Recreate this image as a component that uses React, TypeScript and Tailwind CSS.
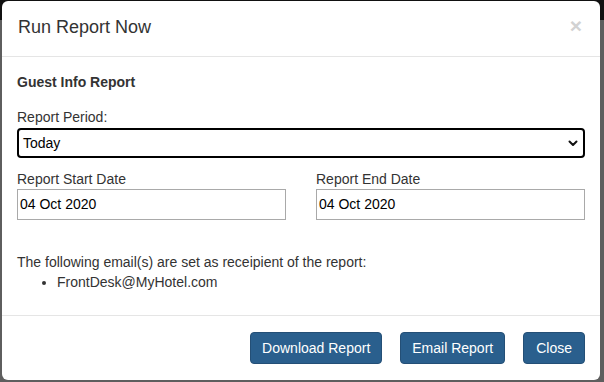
import React from "react";

export default function App() {
  return (
    <div
      className="w-[604px] h-[382px] overflow-hidden bg-[linear-gradient(#111111_0px,#111111_20px,#5e5e5e_20px)] pt-[1px] pl-[2px]"
      style={{ fontFamily: '"Liberation Sans", Arial, sans-serif' }}
    >
      <div className="w-[598px] h-[379px] bg-white rounded-[6px] text-[14px] text-[#333333] flex flex-col">
        {/* Header */}
        <div className="h-[56px] border-b border-[#e5e5e5] pl-[16px] pr-[18px] pt-[16px] flex items-start">
          <div className="text-[18px] leading-[20px] text-[#333333]">Run Report Now</div>
          <div className="ml-auto -mt-[2px] text-[21px] font-bold leading-[21px] text-[#d2d2d2]">×</div>
        </div>
        {/* Body */}
        <div className="h-[259px] px-[15px] pt-[15px] border-b border-[#e5e5e5]">
          <div className="font-bold leading-[20px]">Guest Info Report</div>
          <div className="mt-[15px] leading-[20px]">Report Period:</div>
          <div className="mt-[1px] h-[30px] rounded-[4px] border-2 border-black flex items-center pl-[4px] pr-[4px] text-black">
            <span>Today</span>
            <svg className="ml-auto" width="12" height="12" viewBox="0 0 12 12">
              <path d="M2.5 4.5 L6 8 L9.5 4.5" fill="none" stroke="#111" strokeWidth="2" strokeLinecap="round" strokeLinejoin="round" />
            </svg>
          </div>
          <div className="mt-[11px] grid grid-cols-2 gap-x-[30px]">
            <div>
              <div className="leading-[20px]">Report Start Date</div>
              <div className="h-[31px] border border-[#a9a9a9] flex items-center pl-[2px] text-black">04 Oct 2020</div>
            </div>
            <div>
              <div className="leading-[20px]">Report End Date</div>
              <div className="h-[31px] border border-[#a9a9a9] flex items-center pl-[2px] text-black">04 Oct 2020</div>
            </div>
          </div>
          <div className="mt-[32px] leading-[20px]">The following email(s) are set as receipient of the report:</div>
          <ul className="list-disc pl-[40px] leading-[20px]">
            <li>FrontDesk@MyHotel.com</li>
          </ul>
        </div>
        {/* Footer */}
        <div className="flex justify-end gap-[18px] pt-[16px] pr-[15px]">
          <button className="h-[32px] px-[11px] rounded-[4px] bg-[#2a5f8d] border border-[#244f76] text-white text-[14px]">Download Report</button>
          <button className="h-[32px] px-[11px] rounded-[4px] bg-[#2a5f8d] border border-[#244f76] text-white text-[14px]">Email Report</button>
          <button className="h-[32px] px-[12px] rounded-[4px] bg-[#2a5f8d] border border-[#244f76] text-white text-[14px]">Close</button>
        </div>
      </div>
    </div>
  );
}
